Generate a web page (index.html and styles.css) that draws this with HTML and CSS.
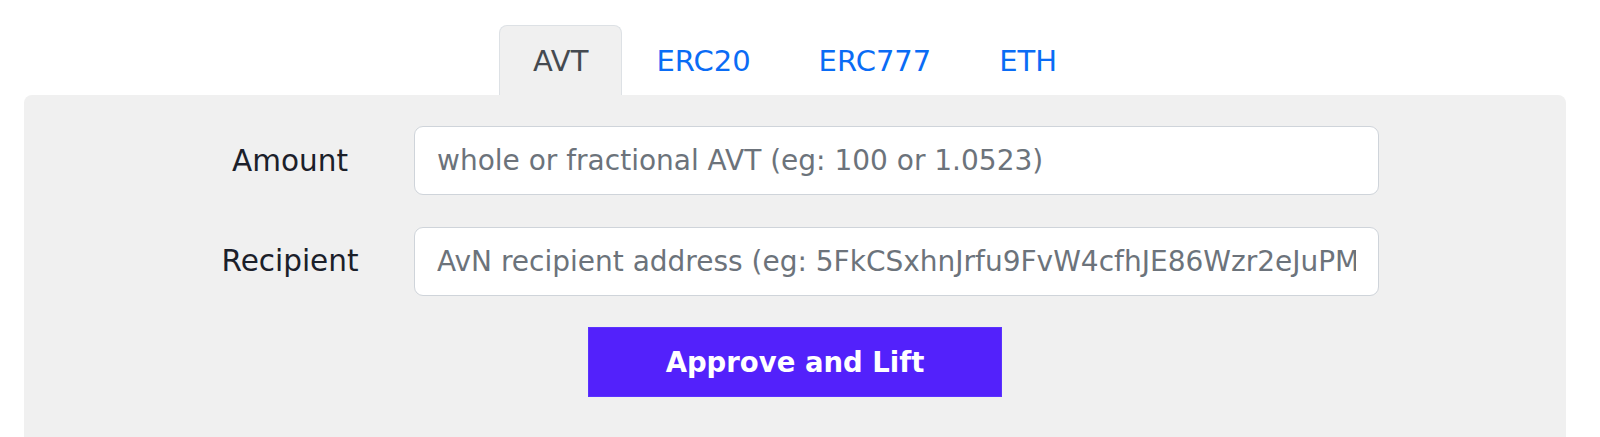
FILE: index.html
```html
<!DOCTYPE html>
<html lang="en">
<head>
<meta charset="utf-8">
<title>Lift</title>
<link rel="stylesheet" href="styles.css">
</head>
<body>
<div class="wrap">
  <nav class="tabs">
    <a class="tab active">AVT</a>
    <a class="tab">ERC20</a>
    <a class="tab">ERC777</a>
    <a class="tab">ETH</a>
  </nav>
  <section class="panel">
    <form class="form">
      <div class="row">
        <label class="label">Amount</label>
        <input class="field" type="text" placeholder="whole or fractional AVT (eg: 100 or 1.0523)">
      </div>
      <div class="row">
        <label class="label">Recipient</label>
        <input class="field" type="text" placeholder="AvN recipient address (eg: 5FkCSxhnJrfu9FvW4cfhJE86Wzr2eJuPMMT2P38wD)">
      </div>
      <div class="actions">
        <button class="btn" type="button">Approve and Lift</button>
      </div>
    </form>
  </section>
</div>
</body>
</html>
```
FILE: styles.css
```css
* { box-sizing: border-box; }
html, body { margin: 0; padding: 0; background: #fff; }
body {
  font-family: "DejaVu Sans", "Open Sans", sans-serif;
  overflow: hidden;
  height: 437px;
}
.wrap {
  margin-left: 24px;
  width: 1542px;
  padding-top: 25px;
}
.tabs {
  display: flex;
  justify-content: center;
  height: 70px;
}
.tab {
  display: flex;
  align-items: center;
  padding: 0 33px;
  height: 70px;
  font-size: 29px;
  color: #0a6cf5;
  border: 1px solid transparent;
  border-bottom: none;
  border-radius: 8px 8px 0 0;
}
.tab.active {
  color: #454a50;
  background: #f0f0f0;
  border-color: #dde1e5;
}
.panel {
  background: #f0f0f0;
  border-radius: 8px 8px 0 0;
  height: 360px;
  padding-top: 31px;
}
.form {
  display: flex;
  flex-direction: column;
  gap: 31.5px;
}
.row {
  display: grid;
  grid-template-columns: 248px 965px;
  align-items: center;
  margin-left: 142px;
}
.label {
  text-align: center;
  font-size: 29.5px;
  color: #1b202a;
}
.field {
  height: 69px;
  width: 100%;
  border: 1.5px solid #cfd4da;
  border-radius: 9px;
  background: #fff;
  padding: 0 22px;
  font-family: "DejaVu Sans", "Open Sans", sans-serif;
  font-size: 28px;
  color: #495057;
  outline: none;
}
.field::placeholder { color: #6c737b; }
.actions {
  display: flex;
  justify-content: center;
}
.btn {
  width: 414px;
  height: 70px;
  background: #5321fb;
  border: 1px solid #5a33ff;
  color: #fff;
  font-family: "DejaVu Sans", "Open Sans", sans-serif;
  font-weight: bold;
  font-size: 27.5px;
  cursor: pointer;
}
```
